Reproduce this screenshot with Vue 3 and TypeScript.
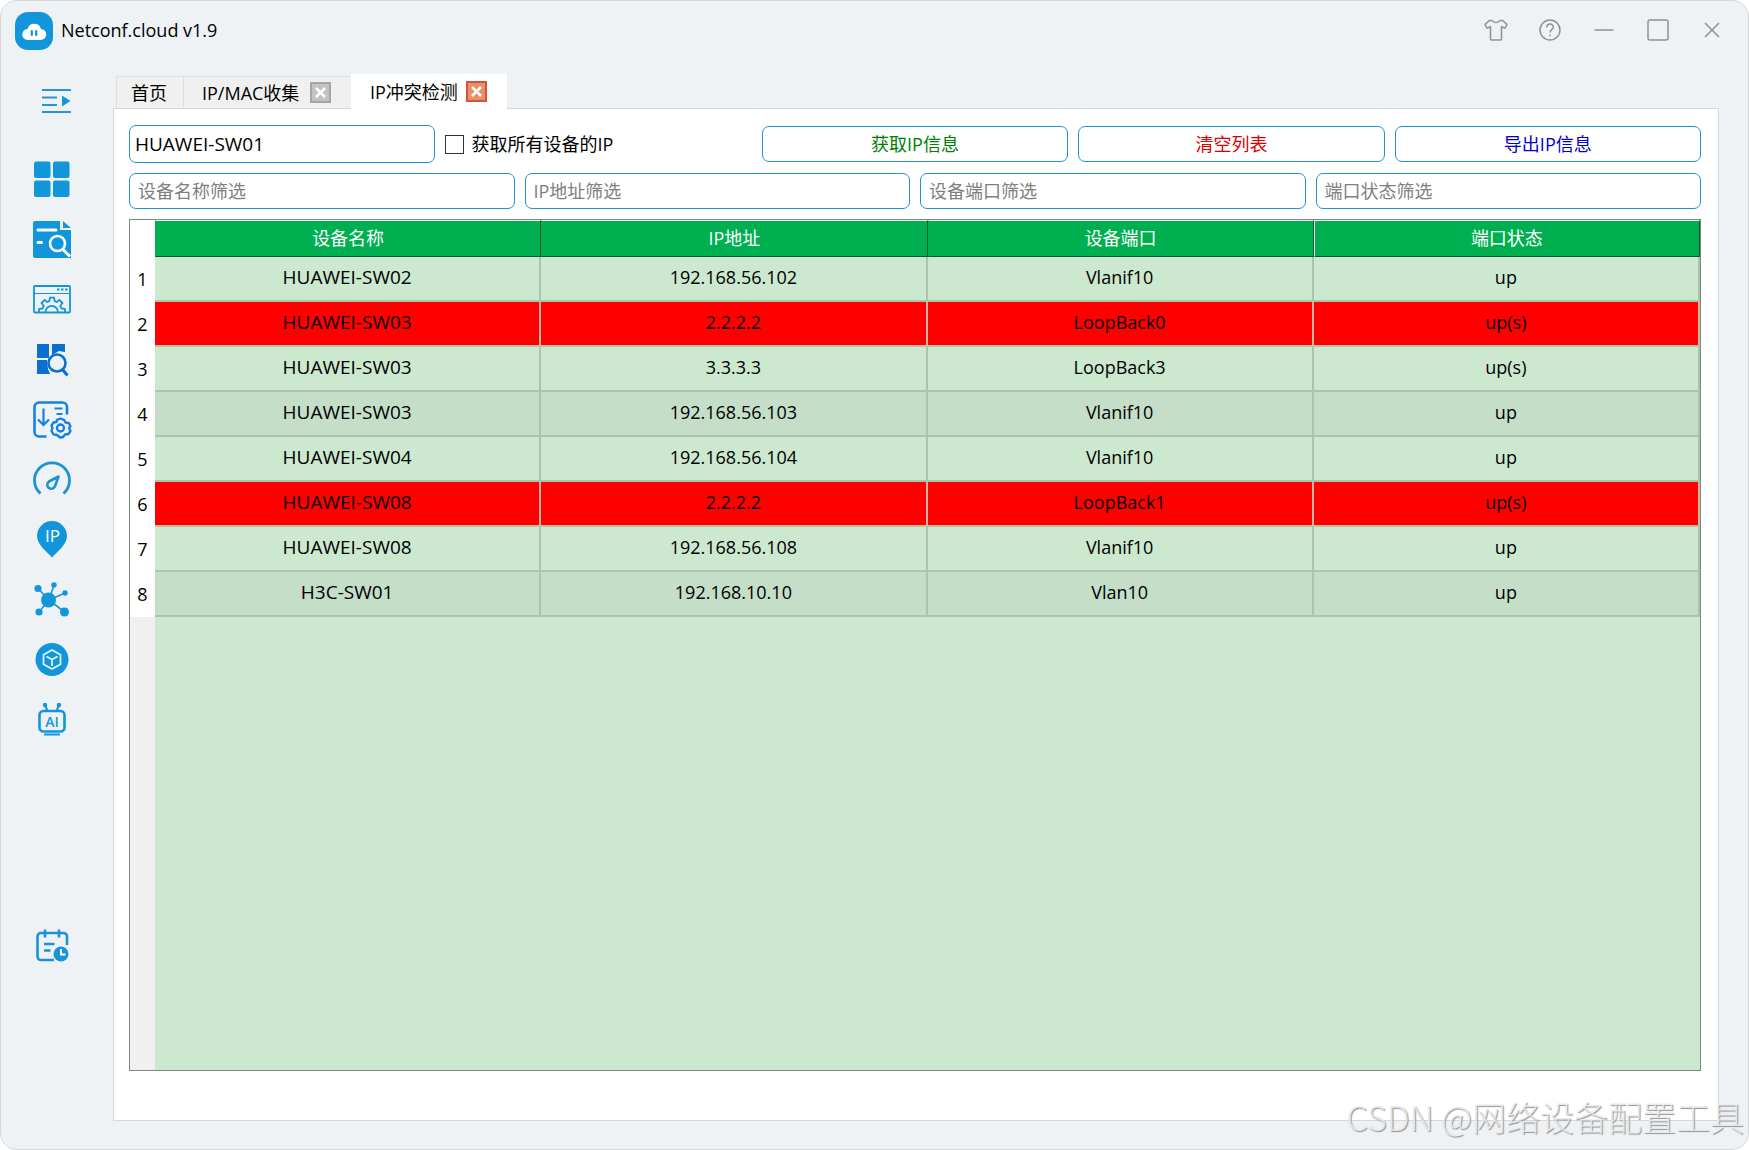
<script setup lang="ts">
import { computed, ref } from 'vue'

interface DeviceRow {
  name: string
  ip: string
  port: string
  state: string
  conflict?: boolean
}

const device = ref('HUAWEI-SW01')
const allDevices = ref(false)
const activeTab = ref('conflict')

const tabs = ref([
  { id: 'home', label: '首页', closable: false },
  { id: 'collect', label: 'IP/MAC收集', closable: true },
  { id: 'conflict', label: 'IP冲突检测', closable: true },
])

const filters = ref([
  { key: 'name', label: '设备名称', text: '' },
  { key: 'ip', label: 'IP地址', text: '' },
  { key: 'port', label: '设备端口', text: '' },
  { key: 'state', label: '端口状态', text: '' },
])

const rows = ref<DeviceRow[]>([
  { name: 'HUAWEI-SW02', ip: '192.168.56.102', port: 'Vlanif10', state: 'up' },
  { name: 'HUAWEI-SW03', ip: '2.2.2.2', port: 'LoopBack0', state: 'up(s)', conflict: true },
  { name: 'HUAWEI-SW03', ip: '3.3.3.3', port: 'LoopBack3', state: 'up(s)' },
  { name: 'HUAWEI-SW03', ip: '192.168.56.103', port: 'Vlanif10', state: 'up' },
  { name: 'HUAWEI-SW04', ip: '192.168.56.104', port: 'Vlanif10', state: 'up' },
  { name: 'HUAWEI-SW08', ip: '2.2.2.2', port: 'LoopBack1', state: 'up(s)', conflict: true },
  { name: 'HUAWEI-SW08', ip: '192.168.56.108', port: 'Vlanif10', state: 'up' },
  { name: 'H3C-SW01', ip: '192.168.10.10', port: 'Vlan10', state: 'up' },
])

const visibleRows = computed(() =>
  rows.value.filter((row) =>
    filters.value.every((f) => String(row[f.key as keyof DeviceRow]).includes(f.text)),
  ),
)

function closeTab(id: string) {
  tabs.value = tabs.value.filter((t) => t.id !== id)
}
</script>

<template>
  <div class="window">
    <header class="titlebar">
      <svg class="logo" viewBox="0 0 38 38" aria-hidden="true">
        <rect width="38" height="38" rx="13" fill="#1296db" />
        <path d="M13 28a5.500 5.500 0 0 1-.5-11 7 7 0 0 1 13.500 0 5.500 5.500 0 0 1-.5 11z" fill="#fff" />
        <path d="M16.800 19v4M21.200 19v4" stroke="#1296db" stroke-width="2.200" stroke-linecap="round" />
      </svg>
      <span class="app-name">Netconf.cloud v1.9</span>
      <div class="window-actions">
        <button type="button" aria-label="skin">
          <svg viewBox="0 0 24 24"><path d="M8 2.500c1.500 2.800 6.500 2.800 8 0h2.500l4.500 4-2 3.500-3.500-1.200V21a1 1 0 0 1-1 1h-9a1 1 0 0 1-1-1V8.800L3 10 1 6.500l4.500-4z" /></svg>
        </button>
        <button type="button" aria-label="help">
          <svg viewBox="0 0 24 24"><circle cx="12" cy="12" r="10" /><path d="M8.800 9.500C8.800 5 15.300 5 15.300 9.200c0 2.500-3.300 2.500-3.300 5.300M12 16.500v1.800" /></svg>
        </button>
        <button type="button" aria-label="minimize">
          <svg viewBox="0 0 24 24"><path d="M2.500 12h19" /></svg>
        </button>
        <button type="button" aria-label="maximize">
          <svg viewBox="0 0 24 24"><rect x="2" y="2" width="20" height="20" rx="2" /></svg>
        </button>
        <button type="button" aria-label="close">
          <svg viewBox="0 0 24 24"><path d="M5 5l14 14M19 5L5 19" /></svg>
        </button>
      </div>
    </header>

    <div class="body">
      <nav class="sidebar">
        <button type="button" class="menu" aria-label="menu">
          <svg viewBox="0 0 40 40" fill="none" stroke="#2a94d0" stroke-width="2">
            <path d="M6 9h29M6 16.500h15M6 24h15M6 31h29" />
            <path d="M26 14.500v11l8.500-5.500z" fill="#1296db" stroke="none" />
          </svg>
        </button>
        <button type="button" aria-label="dashboard">
          <svg viewBox="0 0 40 40" fill="#1296db">
            <rect x="2" y="2.500" width="16.500" height="16.500" rx="2" /><rect x="21" y="2.500" width="16.500" height="16.500" rx="2" />
            <rect x="2" y="21.500" width="16.500" height="16.500" rx="2" /><rect x="21" y="21.500" width="16.500" height="16.500" rx="2" />
          </svg>
        </button>
        <button type="button" aria-label="file search">
          <svg viewBox="0 0 40 40">
            <path d="M3 2h25v9h11v28H3a2 2 0 0 1-2-2V4a2 2 0 0 1 2-2z" fill="#1296db" />
            <path d="M31 2l8 7h-8z" fill="#1296db" />
            <g fill="none" stroke="#fff" stroke-width="3" stroke-linecap="round">
              <path d="M6 11h18M6 23.500h3.500" /><circle cx="25.500" cy="24.500" r="7.500" stroke-width="2.600" />
              <path d="M31 30.500l7 7" stroke-linecap="butt" />
            </g>
          </svg>
        </button>
        <button type="button" aria-label="settings">
          <svg viewBox="0 0 40 40" fill="none" stroke="#1296db" stroke-width="1.800">
            <rect x="2" y="7" width="36" height="26.500" rx="1" /><path d="M2 14.500h36" stroke-width="1" />
            <path d="M25 10.500h2.500M29 10.500h2.500M33 10.500h2.500" stroke-width="2" />
            <path d="M7 33v-3l3.500-.5 1.200-2.700-2.200-2.800 3-3 2.800 2 2-.8.700-3.500h4l.7 3.500 2 .8 2.800-2 3 3-2.200 2.800 1.200 2.700 3.500.5v3" />
            <path d="M13.500 33a6.200 6.200 0 0 1 12.400 0" />
          </svg>
        </button>
        <button type="button" aria-label="inspection">
          <svg viewBox="0 0 40 40" fill="#0a6fd1">
            <path d="M5 5h12v14H5zM20 5h13v8l-6-1-7 4zM5 21h10l1 9 2 5H5z" />
            <circle cx="25" cy="24" r="8.500" fill="none" stroke="#0a6fd1" stroke-width="2.600" />
            <path d="M30.500 30.500l5 6" stroke="#0a6fd1" stroke-width="3" />
          </svg>
        </button>
        <button type="button" aria-label="deployment">
          <svg viewBox="0 0 40 40" fill="none" stroke="#1480e0" stroke-width="2.600">
            <path d="M14.500 37.500H7A4.500 4.500 0 0 1 2.500 33V8A4.500 4.500 0 0 1 7 3.500h23.500A4.500 4.500 0 0 1 35 8v7.500" />
            <path d="M11.500 9.500v16M6 20.500l5.500 5.500 5.500-5.500M22.500 9.500h8M24.500 15h6" stroke-width="2.200" />
            <path d="M25 20.800l3.500-1.300 3.500 1.300 1.500 2.700 3.500.7 1.500 3.300-1.500 1.500 1.500 3-2 3-3.500.5-2 2.500-3 .5-3-2.500-3.500-.7-2-3.300 1-3-1-2.500 2-3 3-.5z" stroke-linejoin="round" stroke-width="2.300" />
            <circle cx="28.500" cy="29" r="3.500" stroke-width="2.300" />
          </svg>
        </button>
        <button type="button" aria-label="performance">
          <svg viewBox="0 0 40 40" fill="none" stroke="#1c93d4" stroke-width="2.800">
            <path d="M8.500 34.500A17.500 17.500 0 1 1 31.500 34.500" />
            <path d="M26.500 17.500l-9.500 5a4 4 0 1 0 5.800 5.200z" stroke-width="2.600" stroke-linejoin="round" />
          </svg>
        </button>
        <button type="button" aria-label="ip">
          <svg viewBox="0 0 40 40">
            <path d="M20 38.500C15 33 5 25.500 5 17a15 15 0 0 1 30 0c0 8.500-10 16-15 21.500z" fill="#1296db" />
            <text x="20.500" y="23" class="pin-text">IP</text>
          </svg>
        </button>
        <button type="button" aria-label="topology">
          <svg viewBox="0 0 40 40" fill="#1296db" stroke="#1296db" stroke-width="1.600">
            <path d="M17 21L6 9.500M17 21l5-15M17 21l16-7M17 21L7 33M17 21l15.500 12" />
            <g stroke="none"><circle cx="16.500" cy="21" r="7.500" /><circle cx="6" cy="9.500" r="3.600" /><circle cx="22" cy="6" r="2.700" /><circle cx="33" cy="14" r="2.700" /><circle cx="7" cy="33" r="3.600" /><circle cx="32.500" cy="33" r="4.500" /></g>
          </svg>
        </button>
        <button type="button" aria-label="cube">
          <svg viewBox="0 0 40 40" fill="none" stroke="#e8f5fc" stroke-width="1.700" stroke-linejoin="round">
            <circle cx="20" cy="20.500" r="16.500" fill="#1296db" stroke="none" />
            <path d="M20 11l8.500 4.700v9.600L20 30l-8.500-4.700v-9.600z" /><path d="M14.500 17.500l5.500 3 5.500-3M20 20.500V27" />
          </svg>
        </button>
        <button type="button" aria-label="assistant">
          <svg viewBox="0 0 40 40" fill="none" stroke="#1296db" stroke-width="2.600">
            <rect x="7.500" y="12" width="25" height="20.500" rx="4" />
            <path d="M13 6l2.500 6M27 6l-2.500 6" stroke-width="2" /><path d="M12 35.500h16" stroke-width="2" />
            <circle cx="13" cy="6" r="1.200" stroke-width="2" /><circle cx="27" cy="6" r="1.200" stroke-width="2" />
            <text x="20" y="27.500" class="robot-text">AI</text>
          </svg>
        </button>
        <button type="button" class="schedule" aria-label="schedule">
          <svg viewBox="0 0 40 40" fill="none" stroke="#1c93d4" stroke-width="2.600">
            <path d="M22 34H9a3.500 3.500 0 0 1-3.500-3.500v-20A3.500 3.500 0 0 1 9 7h22.500a3.500 3.500 0 0 1 3.500 3.500V19" />
            <path d="M13 3.500v8M27 3.500v8M12 18h10.500M12 24.500h6.500" />
            <circle cx="29" cy="28" r="7.500" fill="#1c93d4" stroke="none" />
            <path d="M29 23v5.500h4.500" stroke="#fff" stroke-width="1.800" />
          </svg>
        </button>
      </nav>

      <main class="content">
        <div class="tabs">
          <div
            v-for="tab in tabs"
            :key="tab.id"
            class="tab"
            :class="{ active: tab.id === activeTab, closable: tab.closable }"
          >
            <button type="button" class="tab-label" @click="activeTab = tab.id">{{ tab.label }}</button>
            <button v-if="tab.closable" type="button" class="tab-close" aria-label="close tab" @click="closeTab(tab.id)">
              <svg viewBox="0 0 17 17"><path d="M4 4l9 9M13 4l-9 9" /></svg>
            </button>
          </div>
        </div>

        <section class="pane">
          <div class="toolbar">
            <input v-model="device" class="field device" type="text" aria-label="设备" />
            <label class="check"><input v-model="allDevices" type="checkbox" />获取所有设备的IP</label>
            <button type="button" class="action fetch">获取IP信息</button>
            <button type="button" class="action clear" @click="rows = []">清空列表</button>
            <button type="button" class="action export">导出IP信息</button>
          </div>

          <div class="filters">
            <input
              v-for="f in filters"
              :key="f.key"
              v-model="f.text"
              class="field"
              type="text"
              :placeholder="f.label + '筛选'"
              :aria-label="f.label + '筛选'"
            />
          </div>

          <div class="grid">
            <table>
              <thead>
                <tr>
                  <td class="corner"></td>
                  <th v-for="f in filters" :key="f.key" scope="col">{{ f.label }}</th>
                </tr>
              </thead>
              <tbody>
                <tr v-for="(row, i) in visibleRows" :key="i" :class="{ conflict: row.conflict }">
                  <th scope="row">{{ i + 1 }}</th>
                  <td class="name">{{ row.name }}</td>
                  <td>{{ row.ip }}</td>
                  <td>{{ row.port }}</td>
                  <td>{{ row.state }}</td>
                </tr>
              </tbody>
            </table>
          </div>
        </section>
      </main>
    </div>

    <div class="watermark">CSDN @网络设备配置工具</div>
  </div>
</template>

<style>
body {
  margin: 0;
  background: #fff;
}
</style>

<style scoped>
.window {
  position: relative;
  box-sizing: border-box;
  min-height: 100vh;
  display: flex;
  flex-direction: column;
  border: 1px solid #d4d7da;
  border-radius: 17px;
  background: #eef2f5;
  color: #000;
  font: 18px/24px 'Open Sans', 'Noto Sans CJK SC', sans-serif;
}

button {
  padding: 0;
  border: 0;
  background: none;
  color: inherit;
  font: inherit;
}

svg {
  display: block;
}

.titlebar {
  display: flex;
  align-items: center;
  height: 60px;
  padding: 0 24px 0 14px;
}

.logo {
  width: 38px;
  height: 38px;
  margin-right: 8px;
}

.app-name,
.window-actions {
  padding-bottom: 2px;
}

.window-actions {
  display: flex;
  gap: 30px;
  margin-left: auto;
}

.window-actions svg {
  width: 24px;
  height: 24px;
  fill: none;
  stroke: #8d9296;
  stroke-width: 1.5;
}

.body {
  flex: 1;
  display: flex;
}

.sidebar {
  display: flex;
  flex-direction: column;
  gap: 20px;
  width: 81px;
  padding: 20px 0 16px 31px;
}

.sidebar button {
  width: 40px;
  height: 40px;
}

.sidebar .menu {
  margin: 0 0 18px 4px;
}

.sidebar .schedule {
  margin: auto 0;
}

.pin-text,
.robot-text {
  font-family: 'Open Sans', sans-serif;
  text-anchor: middle;
  stroke: none;
}

.pin-text {
  font-size: 17px;
  fill: #fff;
}

.robot-text {
  font-size: 14px;
  font-weight: 600;
  fill: #1296db;
}

.content {
  flex: 1;
  display: flex;
  flex-direction: column;
  margin: 13px 29px 28px 0;
}

.tabs {
  display: flex;
  align-items: flex-end;
  padding-left: 3px;
}

.tab {
  display: flex;
  align-items: center;
  justify-content: space-between;
  gap: 6px;
  box-sizing: border-box;
  height: 32px;
  padding: 0 16px 0 14px;
  border: 1px solid #dcdfe1;
  border-right: 0;
  border-bottom: 0;
  background: #f0f0f0;
}

.tab.closable {
  min-width: 168px;
  padding: 0 20px 0 18px;
}

.tab.active {
  position: relative;
  min-width: 156px;
  height: 35px;
  margin-bottom: -1px;
  padding-bottom: 1px;
  border-color: #fff;
  background: #fff;
}

.tab-close svg {
  box-sizing: border-box;
  width: 21px;
  height: 21px;
  border: 2px solid #a5a5a5;
  background: #c3c3c3;
  fill: none;
  stroke: #fff;
  stroke-width: 2.5;
}

.tab.active .tab-close svg {
  border-color: #d2533f;
  background: #e9906a;
}

.pane {
  flex: 1;
  display: flex;
  flex-direction: column;
  gap: 10px;
  padding: 16px 17px 49px 15px;
  border: 1px solid #d5d8da;
  background: #fff;
}

.toolbar,
.filters {
  display: grid;
  grid-template-columns: repeat(5, minmax(0, 1fr));
  align-items: center;
  gap: 10px;
}

.filters {
  grid-template-columns: repeat(4, minmax(0, 1fr));
}

.field,
.action {
  box-sizing: border-box;
  width: 100%;
  height: 36px;
  border: 1px solid #2492cf;
  border-radius: 7px;
  background: #fff;
}

.field {
  padding: 0 8px;
  color: #000;
  font: inherit;
}

.field::placeholder {
  color: #808080;
  opacity: 1;
}

.device {
  height: 38px;
  padding: 0 5px;
  font-size: 19px;
}

.fetch {
  color: #008000;
}

.clear {
  color: #dc0000;
}

.export {
  color: #0000d0;
}

.check {
  display: flex;
  align-items: center;
  gap: 7px;
}

.check input {
  appearance: none;
  box-sizing: border-box;
  width: 19px;
  height: 19px;
  margin: 0;
  border: 1px solid #333;
  background: #fff;
}

.check input:checked {
  background: #2492cf;
}

.grid {
  flex: 1;
  border: 1px solid #7c8a80;
  background: linear-gradient(to right, #f0f0f0 25px, #cce8cf 25px);
}

table {
  width: 100%;
  table-layout: fixed;
  border-collapse: separate;
  border-spacing: 0;
  text-align: center;
}

th,
td {
  box-sizing: border-box;
  padding: 0;
  font-weight: 400;
}

.corner {
  width: 25px;
  background: #fff;
}

thead th {
  height: 37px;
  padding-bottom: 1px;
  border: 1px solid #0a5a2e;
  border-top-color: #e9f7ee;
  border-left-color: #00b050;
  background: #00b050;
  color: #fff;
}

thead th:last-child {
  border-left-color: #e9f7ee;
}

tbody th {
  height: 45px;
  padding-bottom: 1px;
  background: #fff;
}

tbody td {
  padding-bottom: 4px;
  border: 0 solid #a9c5ae;
  border-width: 0 2px 2px 0;
  background: #cce8cf;
}

tbody .name {
  font-size: 19px;
}

tbody tr:nth-child(even) td {
  background: #c4dec8;
}

tbody tr.conflict td {
  border-color: #c3bba4;
  background: #f00;
}

.watermark {
  position: absolute;
  right: 4px;
  bottom: 8px;
  color: rgba(235, 237, 238, 0.9);
  font: 300 34px/48px 'Noto Sans CJK SC', sans-serif;
  text-shadow: 1px 1px 1px #8e9296;
  white-space: nowrap;
  pointer-events: none;
}
</style>
